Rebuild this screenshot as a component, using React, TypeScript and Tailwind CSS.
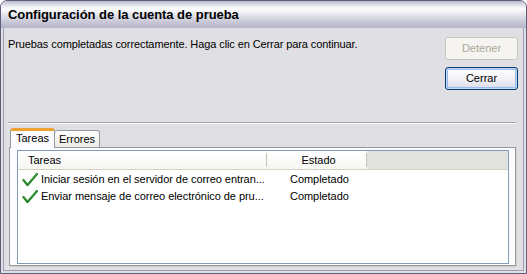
import React from 'react';

const CheckIcon: React.FC = () => (
  <svg width="16" height="14" viewBox="0 0 16 14" className="shrink-0">
    <path d="M1.5 7 L5.5 12 L15 1" fill="none" stroke="#1f7d22" strokeWidth="2.2" strokeLinecap="round" strokeLinejoin="round" />
    <path d="M2 7 L5.5 11 L14.5 1.5" fill="none" stroke="#43b043" strokeWidth="0.9" strokeLinecap="round" strokeLinejoin="round" />
  </svg>
);

interface Task {
  name: string;
  status: string;
}

const tasks: Task[] = [
  { name: 'Iniciar sesión en el servidor de correo entran...', status: 'Completado' },
  { name: 'Enviar mensaje de correo electrónico de pru...', status: 'Completado' },
];

const App: React.FC = () => {
  return (
    <div className="w-[527px] h-[274px] font-['Liberation_Sans',Arial,sans-serif] text-[11px] text-black">
      <div className="flex h-full flex-col rounded-t-[7px] border border-[#5c5e7c] bg-[#e0dfe3]">
        {/* Title bar */}
        <div className="flex h-[27px] shrink-0 items-center rounded-t-[6px] bg-[linear-gradient(to_bottom,#b9b9cd_0%,#e9e9f1_18%,#fdfdfe_30%,#e6e6ee_50%,#cacad9_75%,#b4b4c8_100%)] pl-[7px]">
          <span className="text-[13px] font-bold tracking-[-0.05px] text-[#000]">Configuración de la cuenta de prueba</span>
        </div>

        {/* Body */}
        <div className="mx-[2px] mb-[2px] flex flex-1 flex-col border border-t-0 border-[#9d9db3]">
          <div className="flex justify-between pt-[9px]">
            <p className="pl-[4px] pt-[1px] leading-[13px] tracking-[-0.1px]">
              Pruebas completadas correctamente. Haga clic en Cerrar para continuar.
            </p>
            <div className="mr-[5px] flex flex-col gap-[7px]">
              <button className="h-[23px] w-[73px] rounded-[3px] border border-[#c9c7ba] bg-[#f5f4f0] text-[#aca899]">
                Detener
              </button>
              <button className="h-[23px] w-[73px] rounded-[3px] border border-[#003c74] bg-[linear-gradient(to_bottom,#ffffff_0%,#f4f4f8_45%,#dcdce8_100%)] shadow-[inset_0_0_0_1px_#c4d9f5,inset_0_0_0_2px_#9bbbeb]">
                Cerrar
              </button>
            </div>
          </div>

          <div className="ml-[4px] mr-[7px] mt-[32px] border-t border-b border-t-[#a3a3ad] border-b-white" />

          {/* Tabs */}
          <div className="ml-[6px] mt-[4px] flex items-end">
            <div className="relative z-10 -mb-px flex h-[20px] items-start rounded-t-[3px] border-x border-t-[3px] border-x-[#919b9c] border-t-[#f0a134] bg-[#fcfcfe] px-[5px] pt-[1px]">
              <span className="leading-[13px]">Tareas</span>
            </div>
            <div className="flex h-[17px] items-center rounded-t-[3px] border-r border-t border-[#919b9c] bg-[linear-gradient(to_bottom,#ffffff,#ecebe6)] px-[4px] pt-[1px]">
              <span>Errores</span>
            </div>
          </div>

          <div className="mb-[4px] ml-[5px] mr-[7px] flex flex-1 flex-col border border-[#919b9c] bg-[#fcfcfe] pb-[1px] pl-[7px] pr-[6px] pt-[2px] shadow-[1px_1px_0_#d0cfc8]">
            <div className="flex flex-1 flex-col border border-[#7f9db9] bg-white">
              {/* Header */}
              <div className="flex h-[19px] shrink-0 border-b border-[#d5d2c3] bg-[linear-gradient(to_bottom,#ffffff,#f6f6f3)]">
                <div className="my-[2px] flex w-[249px] items-center border-r border-[#c7c5b8] pl-[10px]">Tareas</div>
                <div className="my-[2px] flex w-[100px] items-center justify-center border-r border-[#c7c5b8] pl-[4px]">Estado</div>
                <div className="flex-1 bg-[#e2e3e1]" />
              </div>
              {/* Rows */}
              <div className="flex flex-col pt-[1px] tracking-[-0.05px]">
                {tasks.map((task) => (
                  <div key={task.name} className="flex h-[17px] items-center">
                    <div className="flex w-[250px] items-center gap-[3px] overflow-hidden whitespace-nowrap pl-[4px]">
                      <CheckIcon />
                      <span>{task.name}</span>
                    </div>
                    <div className="pl-[22px]">{task.status}</div>
                  </div>
                ))}
              </div>
            </div>
          </div>
        </div>
      </div>
    </div>
  );
};

export default App;
